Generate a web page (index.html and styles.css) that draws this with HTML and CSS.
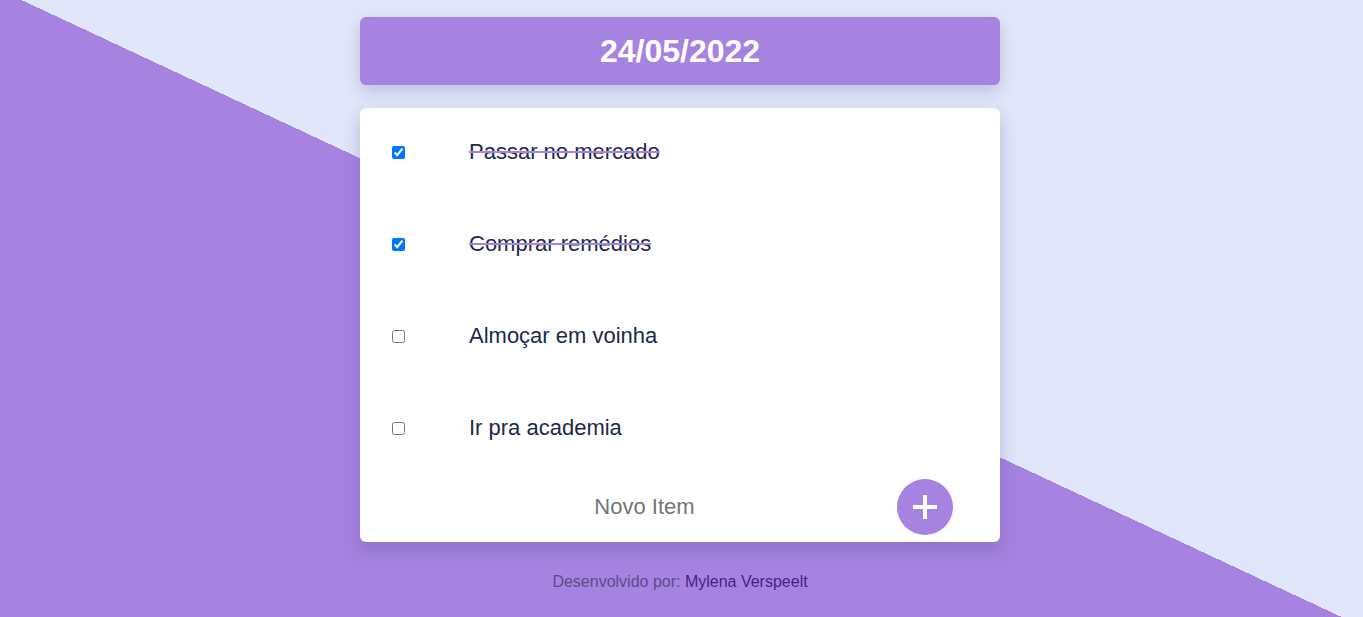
FILE: index.html
```html
<!DOCTYPE html>
<html lang="pt-BR">
<head>
<meta charset="utf-8">
<title>Lista de tarefas</title>
<link rel="stylesheet" href="styles.css">
</head>
<body>
<main class="app">
  <header class="date-card">
    <h1 class="date">24/05/2022</h1>
  </header>
  <section class="list-card">
    <ul class="items">
      <li class="item"><input type="checkbox" class="check" checked><span class="label done">Passar no mercado</span></li>
      <li class="item"><input type="checkbox" class="check" checked><span class="label done">Comprar remédios</span></li>
      <li class="item"><input type="checkbox" class="check"><span class="label">Almoçar em voinha</span></li>
      <li class="item"><input type="checkbox" class="check"><span class="label">Ir pra academia</span></li>
    </ul>
    <form class="new-item">
      <input type="text" class="new-input" placeholder="Novo Item">
      <button type="button" class="add-btn" aria-label="Adicionar">
        <svg width="24" height="24" viewBox="0 0 24 24"><path d="M12 0v24M0 12h24" stroke="#fff" stroke-width="4"/></svg>
      </button>
    </form>
  </section>
  <footer class="credits">Desenvolvido por: <span class="author">Mylena Verspeelt</span></footer>
</main>
</body>
</html>
```
FILE: styles.css
```css
html, body {
  margin: 0;
  padding: 0;
  height: 100%;
}
body {
  font-family: "Liberation Sans", Arial, sans-serif;
  background: linear-gradient(25.05deg, #a683e1 50%, #e1e6fa 50%);
  min-height: 617px;
  overflow: hidden;
}
.app {
  width: 640px;
  margin-left: calc(50% - 321.5px);
  padding-top: 17px;
  display: flex;
  flex-direction: column;
}
.date-card {
  height: 68px;
  background: #a683e1;
  border-radius: 6px;
  box-shadow: 0 6px 16px rgba(60, 60, 110, 0.22);
  display: flex;
  align-items: center;
  justify-content: center;
}
.date {
  margin: 0;
  color: #fff;
  font-size: 32px;
  font-weight: bold;
  line-height: 1;
}
.list-card {
  margin-top: 23px;
  height: 434px;
  background: #fff;
  border-radius: 6px;
  box-shadow: 0 8px 18px rgba(60, 60, 110, 0.25);
  display: flex;
  flex-direction: column;
}
.items {
  list-style: none;
  margin: 0;
  padding: 0;
  display: flex;
  flex-direction: column;
  gap: 4px;
}
.item {
  height: 88px;
  display: flex;
  align-items: center;
  padding-left: 32px;
}
.check {
  margin: 0;
  width: 13px;
  height: 13px;
  accent-color: #0075ff;
}
.label {
  margin-left: 64px;
  font-size: 22px;
  color: #1c2a4a;
}
.done {
  text-decoration: line-through;
  text-decoration-color: #a683e1;
  text-decoration-thickness: 2px;
}
.new-item {
  height: 70px;
  display: flex;
  align-items: center;
  padding: 0 47px 0 32px;
  margin: 0;
}
.new-input {
  flex: 1;
  min-width: 0;
  border: none;
  outline: none;
  background: transparent;
  text-align: center;
  font-family: inherit;
  font-size: 22px;
  color: #1c2a4a;
  padding: 0;
}
.new-input::placeholder {
  color: #757575;
}
.add-btn {
  flex: none;
  width: 56px;
  height: 56px;
  border-radius: 50%;
  border: none;
  background: #a683e1;
  display: flex;
  align-items: center;
  justify-content: center;
  padding: 0;
}
.credits {
  margin-top: 31px;
  text-align: center;
  font-size: 16px;
  line-height: 18px;
  color: #5e4a8c;
}
.author {
  color: #4b1d8c;
}
```
